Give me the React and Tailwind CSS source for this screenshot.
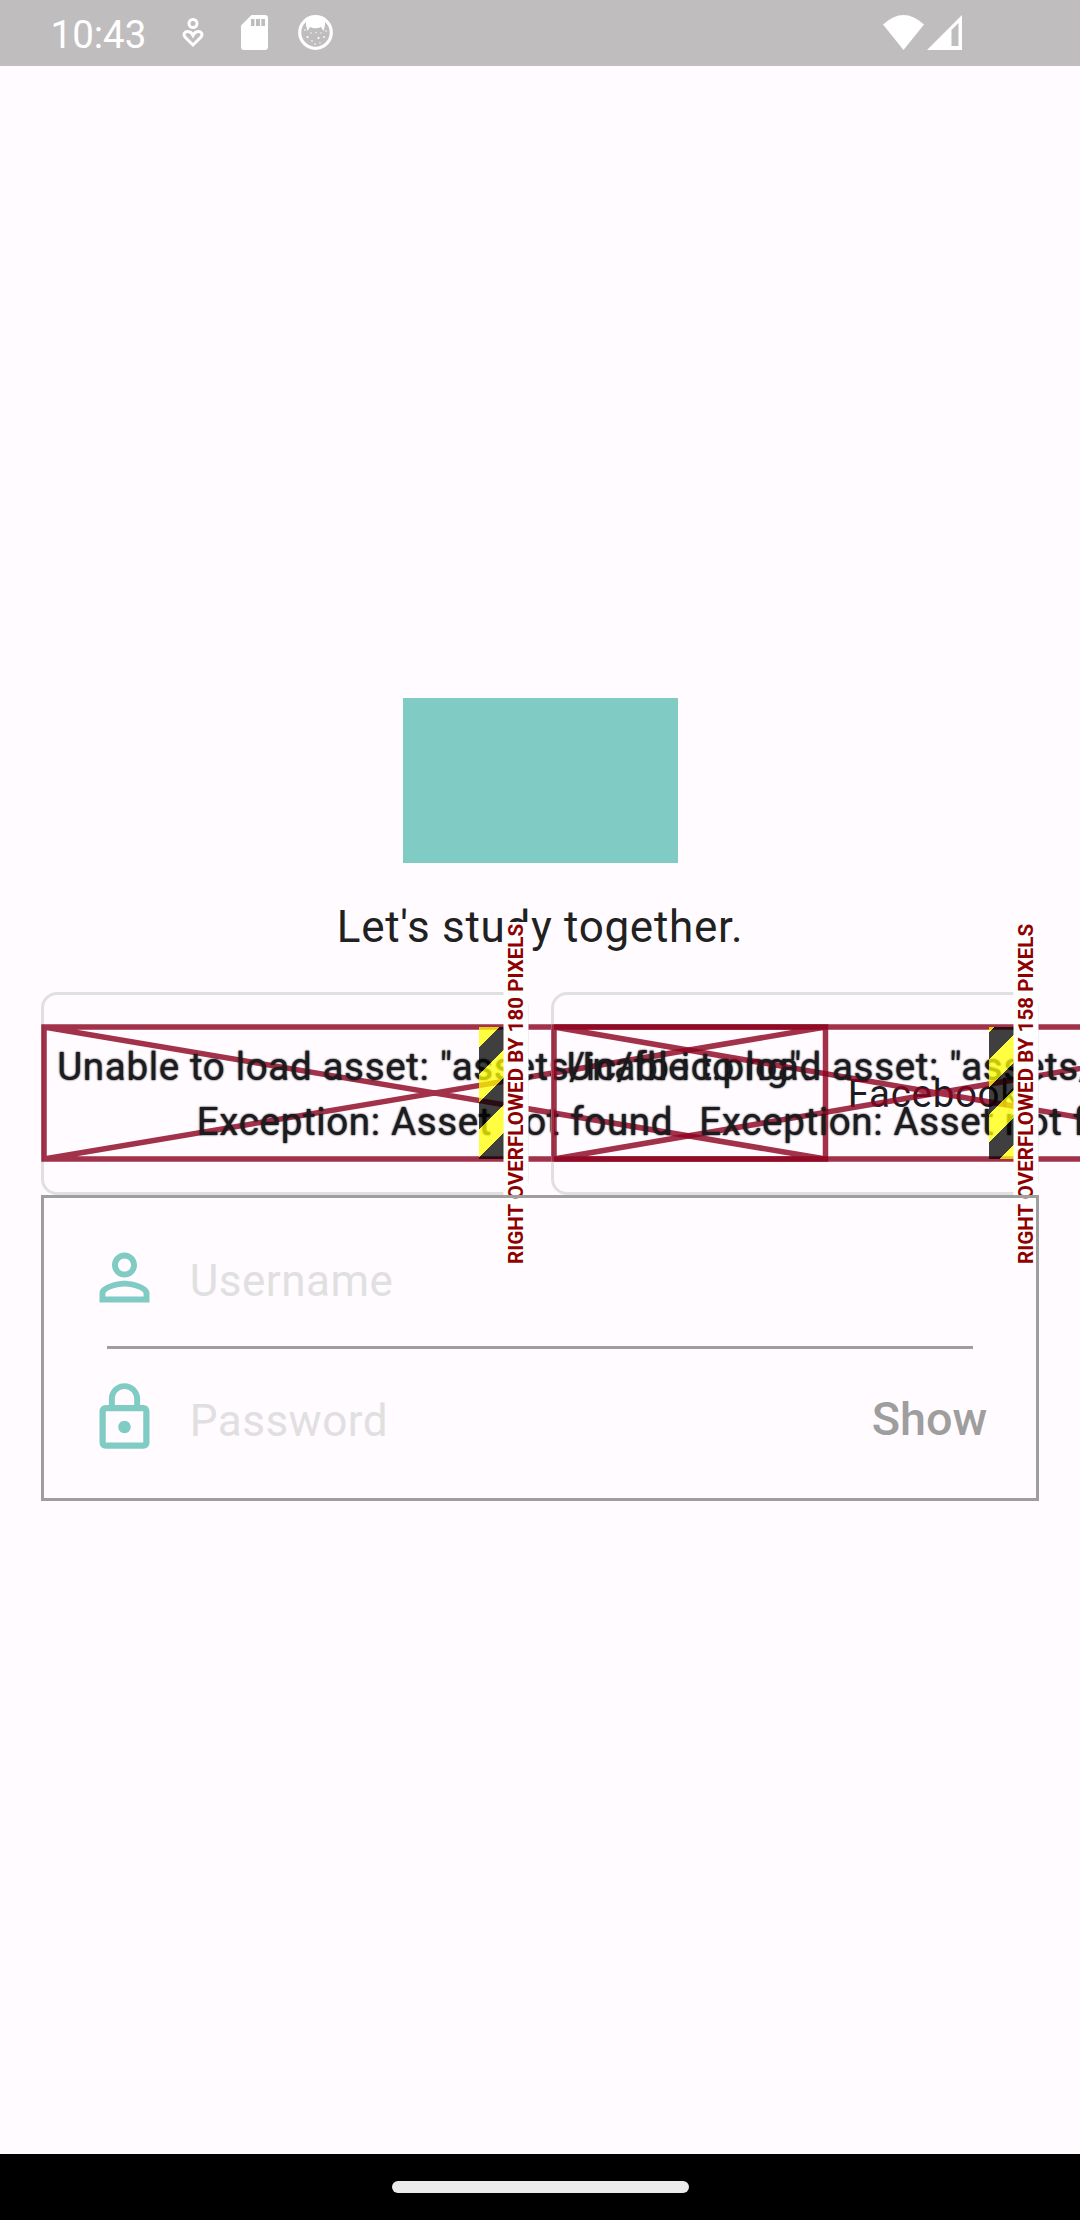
const ROBOTO = "font-['Roboto',sans-serif]";

function StatusBar() {
  return (
    <header className="flex h-[66px] shrink-0 items-center bg-[#bfbdbe] pl-[50.5px] pr-[118px] text-white">
      <span className="w-[96.5px] whitespace-nowrap pt-[4px] text-[38.5px] leading-[44px]">10:43</span>
      <svg className="ml-[35px] h-[32px] w-[22px]" viewBox="0 0 22 32" fill="none" stroke="white" strokeWidth="3">
        <circle cx="11" cy="6.5" r="4" />
        <path d="M11 28 L3.2 20.3 C0.5 17 3 14.4 6 14.6 C8.5 14.8 10 16.5 11 18.5 C12 16.5 13.5 14.8 16 14.6 C19 14.4 21.5 17 18.8 20.3 Z" />
      </svg>
      <svg className="mb-[1px] ml-[37px] h-[35px] w-[27px]" viewBox="0 0 27 35">
        <path fill="white" d="M10.5 0H24a3 3 0 0 1 3 3v29a3 3 0 0 1-3 3H3a3 3 0 0 1-3-3V10.5z" />
        <path fill="#bfbdbe" d="M10 4h3.5v7h-3.5zM15 4h4v7h-4zM20.3 4h3.7v7h-3.7z" />
      </svg>
      <svg className="mb-[1px] ml-[30px] h-[35px] w-[35px]" viewBox="0 0 35 35">
        <circle cx="17.5" cy="17.5" r="15.8" fill="none" stroke="white" strokeWidth="3.2" />
        <path fill="white" d="M8 5 Q17.5 -2 27 5 L27 10 L25.5 16 L23 12 Q17.5 14.5 12 12 L9.5 16 L8 10z" />
        <g fill="white">
          <circle cx="7" cy="15" r="0.8" />
          <circle cx="9.5" cy="22" r="1.1" />
          <circle cx="13" cy="18" r="0.7" />
          <circle cx="14" cy="26" r="0.8" />
          <circle cx="18" cy="17.5" r="0.7" />
          <circle cx="20.5" cy="23" r="1.1" />
          <circle cx="23" cy="18" r="0.7" />
          <circle cx="26" cy="22" r="0.9" />
          <circle cx="28" cy="16" r="0.8" />
          <circle cx="17" cy="29" r="0.8" />
          <circle cx="22" cy="28" r="0.7" />
        </g>
      </svg>
      <svg className="mb-[2px] ml-auto h-[35px] w-[41px]" viewBox="0 0 41 35">
        <path fill="white" d="M0 9.5 Q20.5 -9.5 41 9.5 L20.5 35z" />
      </svg>
      <svg className="mb-[2px] ml-[3px] h-[35px] w-[35px]" viewBox="0 0 35 35">
        <path fill="white" fillRule="evenodd" d="M0 35L35 0V35zM24.5 15V31h7V8z" />
      </svg>
    </header>
  );
}

function BrokenAsset({ name, width }) {
  return (
    <div className="relative h-[132px] shrink-0" style={{ width }}>
      <svg className="absolute inset-0 h-full w-full overflow-visible">
        <path
          d={`M0 0H${width}V132H0ZM0 0L${width} 132M${width} 0L0 132`}
          fill="none"
          stroke="#8d021f"
          strokeOpacity="0.81"
          strokeWidth="5.5"
        />
      </svg>
      <div className="relative flex h-full flex-col items-center justify-center whitespace-nowrap pt-[2px] text-[38.5px] leading-[55px] tracking-[0.66px] text-[#1c1b1f] [text-shadow:0_0_2px_#000]">
        <span>Unable to load asset: "{name}".</span>
        <span>Exception: Asset not found</span>
      </div>
    </div>
  );
}

function OverflowMarker({ pixels, stripes }) {
  return (
    <div className={"absolute -right-px top-[32px] h-[132px] w-[48.2px] " + stripes}>
      <div className="absolute left-[25px] top-[-105px] flex h-[343px] w-[24.5px] rotate-180 items-center justify-center bg-white text-[20.6px] font-bold leading-[24px] text-[#900000] [writing-mode:vertical-rl]">
        <span className="whitespace-nowrap">RIGHT OVERFLOWED BY {pixels} PIXELS</span>
      </div>
    </div>
  );
}

function SocialCard({ asset, assetWidth, label, pixels, stripes }) {
  return (
    <div className="relative flex h-[203.5px] min-w-0 flex-1 items-center rounded-[16px] border-[3px] border-[#e0e0e0]">
      <BrokenAsset name={asset} width={assetWidth} />
      <span className="ml-[22px] shrink-0 text-[38.5px] leading-[55px] tracking-[0.69px] text-[#1c1b1f]">{label}</span>
      <OverflowMarker pixels={pixels} stripes={stripes} />
    </div>
  );
}

function PersonIcon() {
  return (
    <svg className="h-[75px] w-[75px]" viewBox="0 0 24 24" fill="#80cbc4">
      <path d="M12 5.9c1.16 0 2.1.94 2.1 2.1s-.94 2.1-2.1 2.1S9.9 9.16 9.9 8s.94-2.1 2.1-2.1m0 9c2.97 0 6.1 1.46 6.1 2.1v1.1H5.9V17c0-.64 3.13-2.1 6.1-2.1M12 4C9.79 4 8 5.79 8 8s1.79 4 4 4 4-1.79 4-4-1.79-4-4-4zm0 9c-2.67 0-8 1.34-8 4v3h16v-3c0-2.66-5.33-4-8-4z" />
    </svg>
  );
}

function LockIcon() {
  return (
    <svg className="h-[75px] w-[75px]" viewBox="0 0 24 24" fill="#80cbc4">
      <path d="M12 17c1.1 0 2-.9 2-2s-.9-2-2-2-2 .9-2 2 .9 2 2 2zm6-9h-1V6c0-2.76-2.24-5-5-5S7 3.24 7 6v2H6c-1.1 0-2 .9-2 2v10c0 1.1.9 2 2 2h12c1.1 0 2-.9 2-2V10c0-1.1-.9-2-2-2zM8.9 6c0-1.71 1.39-3.1 3.1-3.1s3.1 1.39 3.1 3.1v2H8.9V6zM18 20H6V10h12v10z" />
    </svg>
  );
}

export default function App() {
  return (
    <div className={"flex h-[2220px] w-[1080px] flex-col overflow-hidden bg-[#fffbff] " + ROBOTO}>
      <StatusBar />
      <main className="flex flex-1 flex-col px-[41.25px] pt-[631.5px]">
        <div className="h-[165px] w-[275px] self-center bg-[#80cbc4]" />
        <p className="mt-[31px] self-center text-[44px] leading-[66px] tracking-[0.69px] text-[#212121]">Let's study together.</p>
        <div className="mt-[32px] flex gap-[22px]">
          <SocialCard
            asset="assets/ic/fb-ic.png"
            assetWidth={781.5}
            label="Facebook"
            pixels="180"
            stripes="bg-[repeating-linear-gradient(135deg,#ffff00bf_0_14.4px,#000000bf_14.4px_33.85px,#ffff00bf_33.85px_38.89px)]"
          />
          <SocialCard
            asset="assets/ic/g-ic.png"
            assetWidth={767}
            label="Google"
            pixels="158"
            stripes="bg-[repeating-linear-gradient(135deg,#ffff00bf_0_3.8px,#000000bf_3.8px_23.3px,#ffff00bf_23.3px_38.89px)]"
          />
        </div>
        <form className="relative h-[306px] border-[3px] border-[#9e9e9e] px-[42.5px]">
          <label className="flex h-[148px] items-center pt-[10px]">
            <PersonIcon />
            <span className="ml-[28px] mt-[8px] text-[44px] leading-[66px] tracking-[0.5px] text-[#e0e0e0]">Username</span>
          </label>
          <div className="mx-[20.5px] h-[3px] bg-[#9e9e9e]" />
          <label className="flex h-[137px] items-center">
            <LockIcon />
            <span className="ml-[28px] mt-[6px] text-[44px] leading-[66px] tracking-[0.5px] text-[#e0e0e0]">Password</span>
            <span className="ml-auto mr-[6px] mt-[3px] text-[46.75px] font-medium leading-[66px] text-[#9e9e9e]">Show</span>
          </label>
        </form>
      </main>
      <footer className="flex h-[66px] shrink-0 justify-center bg-black pt-[27px]">
        <div className="h-[12px] w-[297px] rounded-full bg-[#ebebeb]" />
      </footer>
    </div>
  );
}
